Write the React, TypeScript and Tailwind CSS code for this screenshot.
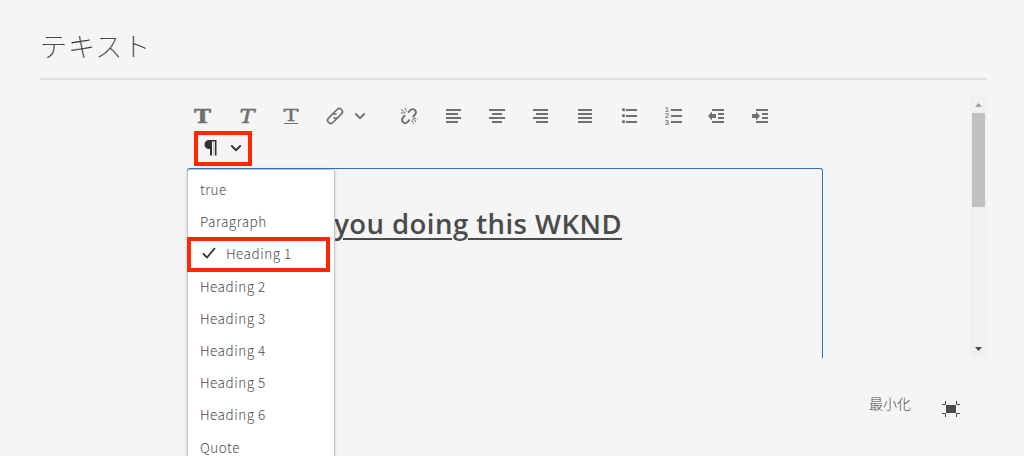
import type { ReactNode } from 'react';

const Icon = ({ children }: { children: ReactNode }) => (
  <svg width="18" height="18" viewBox="0 0 18 18" fill="none" stroke="currentColor" className="shrink-0 overflow-visible">
    {children}
  </svg>
);

const Tool = ({ label, children }: { label: string; children: ReactNode }) => (
  <button aria-label={label} className="flex h-8 w-11 items-center justify-center">
    <Icon>{children}</Icon>
  </button>
);

const Chevron = () => (
  <svg width="12" height="8" viewBox="0 0 12 8" fill="none" stroke="currentColor" strokeWidth="1.900" strokeLinecap="round" className="shrink-0">
    <path d="M1.800 2 6 6.200 10.200 2" />
  </svg>
);

const Lines = ({ rows }: { rows: number[][] }) => (
  <g fill="currentColor" stroke="none">
    {rows.map(([x, y, w]) => (
      <rect key={`${x}-${y}`} x={x} y={y} width={w} height="2" />
    ))}
  </g>
);

const before = ['true', 'Paragraph'];
const after = ['Heading 2', 'Heading 3', 'Heading 4', 'Heading 5', 'Heading 6', 'Quote'];

const Item = ({ text }: { text: string }) => (
  <li className="flex h-[32.150px] items-center pl-3">{text}</li>
);

export default function App() {
  return (
    <main className="h-[456px] overflow-hidden bg-[#f5f5f5] px-10 font-['Noto_Sans_CJK_JP',sans-serif] text-[#4b4b4b]">
      <header className="flex h-20 w-[947px] items-center border-b-2 border-[#e0e0e0] pt-[13px]">
        <h1 className="text-[27px] leading-none font-thin tracking-[1px] text-[#323232] [-webkit-text-stroke:0.2px]">テキスト</h1>
      </header>

      <div className="mt-4 flex h-[262px] w-[947px] justify-between">
        <section className="ml-[141px] flex w-[642px] flex-col pt-1">
          <div className="flex h-8 text-[#707070]">
            <Tool label="Bold">
              <text x="8.500" y="16" textAnchor="middle" textLength="17" lengthAdjust="spacingAndGlyphs" fill="currentColor" stroke="currentColor" strokeWidth=".5" className="font-['DejaVu_Serif'] text-[19px] font-bold">T</text>
            </Tool>
            <Tool label="Italic">
              <text x="9" y="16" textAnchor="middle" textLength="15" lengthAdjust="spacingAndGlyphs" fill="currentColor" stroke="currentColor" strokeWidth=".6" className="font-['DejaVu_Serif'] text-[19px] italic">T</text>
            </Tool>
            <Tool label="Underline">
              <text x="9" y="14" textAnchor="middle" textLength="15" lengthAdjust="spacingAndGlyphs" fill="currentColor" stroke="currentColor" strokeWidth=".4" className="font-['DejaVu_Serif'] text-[17px]">T</text>
              <path d="M2 16.500h14" />
            </Tool>
            <button aria-label="Link" className="flex h-8 w-[74px] items-center gap-[10.500px] pl-[12.500px]">
              <Icon>
                <g strokeWidth="1.600" transform="rotate(-45 9 9)">
                  <path d="M9.500 12.100H2.900a3.100 3.100 0 0 1 0-6.200h5a3.100 3.100 0 0 1 3.100 3.100" />
                  <path d="M8.500 5.900H15.100a3.100 3.100 0 0 1 0 6.200h-5A3.100 3.100 0 0 1 7 9" />
                </g>
              </Icon>
              <Chevron />
            </button>
            <Tool label="Unlink">
              <g strokeWidth="1.900">
                <path d="M8.200 5.600 10.300 3.200a3.200 3.200 0 0 1 4.800 4.300l-2.300 2.700" />
                <path d="m5 8-2.200 2.800a3.200 3.200 0 0 0 4.500 4.500l2.400-2.700" />
              </g>
              <path strokeWidth="1.100" strokeDasharray="2 .8" d="M1.500 2.500 5.500 6.500M5 1l1.500 3.500M1 5.800l3.500.7M12.500 11.500l4 4M12 13.500l1.500 3.500M14 11.300l3.500.5" />
            </Tool>
            <Tool label="Align left"><Lines rows={[[2, 2, 15], [2, 6, 12], [2, 10, 15], [2, 14, 12]]} /></Tool>
            <Tool label="Align center"><Lines rows={[[1, 2, 16], [4, 6, 10], [1, 10, 16], [4, 14, 10]]} /></Tool>
            <Tool label="Align right"><Lines rows={[[1, 2, 15], [4, 6, 12], [1, 10, 15], [4, 14, 12]]} /></Tool>
            <Tool label="Justify"><Lines rows={[[2, 2, 14], [2, 6, 14], [2, 10, 14], [2, 14, 14]]} /></Tool>
            <Tool label="Bullet list">
              <Lines rows={[[6, 2, 11], [6, 8, 11], [6, 14, 11]]} />
              <g fill="currentColor" stroke="none">
                <circle cx="3.500" cy="2.700" r="1.600" />
                <circle cx="3.500" cy="8.700" r="1.600" />
                <circle cx="3.500" cy="14.700" r="1.600" />
              </g>
            </Tool>
            <Tool label="Numbered list">
              <Lines rows={[[7, 2, 11], [7, 8, 11], [7, 14, 11]]} />
              <g fill="currentColor" stroke="currentColor" strokeWidth=".2" className="font-['Liberation_Sans'] text-[7px]">
                <text x="1" y="5.200">1</text>
                <text x="1" y="11.400">2</text>
                <text x="1" y="17.600">3</text>
              </g>
            </Tool>
            <Tool label="Outdent">
              <Lines rows={[[4, 2, 12], [10, 6, 6], [10, 10, 6], [4, 14, 12]]} />
              <path fill="currentColor" stroke="none" d="M0 9 4 4.500V7h4v4H4v2.500Z" />
            </Tool>
            <Tool label="Indent">
              <Lines rows={[[4, 2, 12], [10, 6, 6], [10, 10, 6], [4, 14, 12]]} />
              <path fill="currentColor" stroke="none" d="M8 9 4 4.500V7H0v4h4v2.500Z" />
            </Tool>
          </div>

          <div className="flex h-9 items-start pl-[13px] text-[#323232]">
            <button aria-label="Paragraph format" className="-mt-px flex h-[35px] w-[58px] items-center gap-[11px] border-4 border-[#ff2600] pb-px pl-[6px]">
              <svg width="15" height="16" viewBox="0 0 15 16" fill="currentColor" className="shrink-0">
                <path d="M5 0h7.500v15.500H11V1.500H8V15.500H6V9H5A4.500 4.500 0 0 1 5 0Z" />
                <path d="M9 2h1.500v13.500H9z" opacity=".25" />
              </svg>
              <Chevron />
            </button>
          </div>

          <div className="relative ml-[6px] h-[190px] w-[636px] rounded-t-[3px] border border-b-0 border-[#326ec8]">
            <h2 className="pt-[31px] pr-[200px] text-right font-['Open_Sans','Noto_Sans_CJK_JP',sans-serif] text-[27.500px] leading-[48px] font-semibold tracking-[0.450px] whitespace-nowrap underline decoration-2 underline-offset-[4px]">
              you doing this WKND
            </h2>
            <ul className="absolute top-0 -left-px h-[300px] w-[148px] rounded-t-[3px] border border-[#c4c4c4] bg-white pt-[3px] text-[13.500px] font-light tracking-[0.500px] shadow-[0_1px_4px_rgba(0,0,0,0.15)]">
              {before.map((t) => <Item key={t} text={t} />)}
              <li className="-ml-px -mb-[2.300px] flex h-[35px] w-[143px] items-center border-4 border-[#ff2600] pb-[3px] pl-[11px]">
                <svg width="14" height="12" viewBox="0 0 14 12" fill="none" stroke="#323232" strokeWidth="1.800" className="mr-[10px] shrink-0">
                  <path d="m1 6.500 4 4L13 1" />
                </svg>
                Heading 1
              </li>
              {after.map((t) => <Item key={t} text={t} />)}
            </ul>
          </div>
        </section>

        <div className="flex w-[17px] flex-col items-center bg-[#f1f1f1]">
          <svg width="17" height="17" viewBox="0 0 17 17" className="shrink-0">
            <path d="M5 11h7L8.500 7Z" fill="#a3a3a3" />
          </svg>
          <div className="h-[94px] w-[13px] bg-[#c1c1c1]" />
          <svg width="17" height="17" viewBox="0 0 17 17" className="mt-auto shrink-0">
            <path d="M5 6h7L8.500 10Z" fill="#4b4b4b" />
          </svg>
        </div>
      </div>

      <footer className="ml-[829px] flex h-[96px] items-center gap-[31px] text-[14px] font-light">
        <span className="pb-[7px] leading-none">最小化</span>
        <svg width="18" height="16" viewBox="0 0 18 16" fill="none" stroke="#4b4b4b" className="mt-[6px]">
          <path d="M4 4h10v8H4z" fill="#4b4b4b" stroke="none" />
          <path d="M0 3.500h3.500V0M14.500 0v3.500H18M0 12.500h3.500V16M14.500 16v-3.500H18" />
        </svg>
      </footer>
    </main>
  );
}
